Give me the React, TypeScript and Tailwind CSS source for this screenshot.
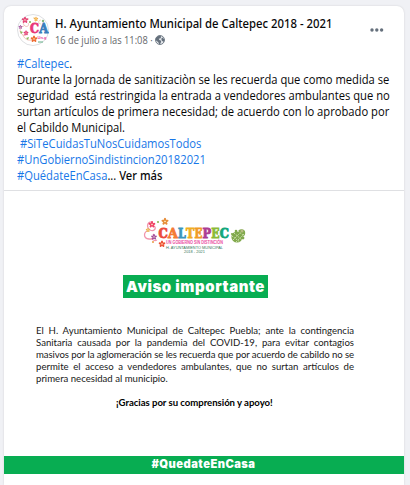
import React from 'react';

function Flower({ x, y, r, color, center = '#fff3c4' }: { x: number; y: number; r: number; color: string; center?: string }) {
  return (
    <g transform={`translate(${x} ${y})`} fill={color}>
      {[0, 72, 144, 216, 288].map((a) => (
        <ellipse key={a} cx="0" cy={-r * 0.6} rx={r * 0.36} ry={r * 0.55} transform={`rotate(${a})`} />
      ))}
      <circle r={r * 0.25} fill={center} />
    </g>
  );
}

function Avatar() {
  return (
    <svg viewBox="0 0 32 32" className="size-8 shrink-0">
      <circle cx="16" cy="16" r="15.5" fill="#fff" stroke="#dedfe2" />
      <g fill="none" stroke="#efb5ac" strokeWidth=".8">
        <path d="M12 5C7 4 5 8 7 11s6 1 4-2M7 12c-5 1-5 7-1 9s6-3 3-4M6 21c2 6 8 6 11 4" />
        <path d="M16 4c3-1 4 3 2 4M24 6c-3 0-3 4 0 4" stroke="#edd39b" />
      </g>
      <Flower x={8} y={6} r={2.9} color="#e54678" />
      <Flower x={19} y={5} r={2} color="#f3ad45" />
      <Flower x={9} y={19} r={2.2} color="#e23877" />
      <Flower x={17} y={25} r={3} color="#ee6c32" />
      <Flower x={3.5} y={13} r={1.8} color="#a85ca5" />
      <circle cx="13" cy="8" r="1" fill="#7ab553" />
      <circle cx="26" cy="7" r="1.2" fill="#83b77c" />
      <path d="M3 17l3 1-2 2zM9 24l3-1-1 3z" fill="#8aba5d" />
      <text x="13" y="19.3" fontSize="13" fontWeight="700" fontFamily="DejaVu Serif, serif" textLength="9" lengthAdjust="spacingAndGlyphs" fill="#e93879" stroke="#e93879" strokeWidth=".8">C</text>
      <text x="22.3" y="19.3" fontSize="13" fontWeight="700" fontFamily="DejaVu Serif, serif" textLength="9" lengthAdjust="spacingAndGlyphs" fill="#397fbc" stroke="#397fbc" strokeWidth=".8">A</text>
      <text x="20.5" y="25" fontSize="4" fontWeight="700" fontFamily="Liberation Sans, sans-serif" fill="#e73e9b">Un.g</text>
      <path d="M21 28h5" stroke="#61ae86" />
    </svg>
  );
}

function Globe() {
  return (
    <svg viewBox="0 0 16 16" className="size-[10px]">
      <circle cx="8" cy="8" r="7.2" fill="#e4e7eb" stroke="#65707c" strokeWidth="1.4" />
      <path d="M2 4l4-3 4 1-1 3-3 1 1 2 3 1-1 4-2 2-2-4-3-2-1-3zM12 4l3 3-1 4-3-2-1-3z" fill="#65707c" />
    </svg>
  );
}

const letters = [
  ['C', 158.5, 9.3, '#ec4b3e'], ['A', 168, 9.9, '#f47b35'], ['L', 178, 7.8, '#3b96bd'], ['T', 186, 8.3, '#efae23'],
  ['E', 194.5, 7.8, '#f09a26'], ['P', 202.5, 8.6, '#ad3c92'], ['E', 211.3, 8.3, '#8bbb38'], ['C', 219.8, 9.2, '#13a77c'],
] as const;

function TownLogo() {
  return (
    <svg viewBox="142 216 106 40" className="h-10 w-[106px]">
      <g fill="none" stroke="#f195ad" strokeWidth="1.3">
        <path d="M153 222c-6-1-7 5-3 8 4 2 7-2 4-4M149 230c-6 2-6 8 0 9 5 1 6-3 4-5M151 238c2 3 4 3 6 2" />
      </g>
      <Flower x={152} y={224.5} r={3} color="#ef4567" />
      <Flower x={165} y={221.5} r={3.2} color="#e68c38" />
      <Flower x={154} y={237} r={2.6} color="#9f4c9d" />
      <Flower x={162} y={244} r={3} color="#ed5135" />
      <Flower x={148} y={230} r={2} color="#e8b34f" />
      <circle cx="158" cy="222" r="1" fill="#83b447" />
      <circle cx="153" cy="242" r="1" fill="#e89c43" />
      {letters.map(([letter, x, width, color], i) => (
        <text key={i} x={x} y="237.6" fontSize="13.8" fontWeight="700" fontFamily="DejaVu Serif, serif" textLength={width} lengthAdjust="spacingAndGlyphs" fill={color} stroke={color} strokeWidth=".9">{letter}</text>
      ))}
      <text x="166" y="244.3" fontSize="4.5" fontWeight="700" fontFamily="Liberation Sans, sans-serif" textLength="57" lengthAdjust="spacingAndGlyphs" fill="#ea4d9f">UN GOBIERNO SIN DISTINCIÓN</text>
      <text x="166" y="249.3" fontSize="3.6" fontFamily="Liberation Sans, sans-serif" textLength="57" lengthAdjust="spacingAndGlyphs" fill="#38775b">H. AYUNTAMIENTO MUNICIPAL</text>
      <text x="184" y="253" fontSize="3.5" fontFamily="Liberation Sans, sans-serif" textLength="21" lengthAdjust="spacingAndGlyphs" fill="#38775b">2018 - 2021</text>
      <g fill="#81a94d">
        <circle cx="237" cy="237" r="5.6" />
        <circle cx="241.5" cy="233" r="3.7" />
        <circle cx="236" cy="231" r="1.3" />
        <circle cx="232" cy="234" r="1.1" />
        <circle cx="243" cy="238" r="1.4" />
      </g>
      <path d="M232 236l8 6M234 233l8 7M238 231l6 5M233 240l7-7M236 242l8-8" stroke="#edf4d3" strokeWidth=".7" strokeDasharray="1.5 1" />
      <circle cx="242" cy="231" r="1.5" fill="#b7bc83" />
    </svg>
  );
}

export default function App() {
  return (
    <main className="h-[485px] w-[410px] overflow-hidden bg-[#f0f1f5] pt-[6px] pl-1 font-['Open_Sans','Noto_Sans',sans-serif] text-[#080809]">
      <article className="h-[479px] w-[400px] rounded-t-[7px] bg-white shadow-[0_0_2px_#cdced2]">
        <header className="flex h-[47px] items-start pt-2 pl-[13px]">
          <Avatar />
          <div className="ml-[6px] w-[310px] whitespace-nowrap">
            <h1 className="h-[19px] w-max origin-left scale-x-[.905] font-['Noto_Sans',sans-serif] text-[12.5px] leading-[19px] font-medium">H. Ayuntamiento Municipal de Caltepec 2018 - 2021</h1>
            <div className="flex h-[14px] items-center text-[10.5px] leading-[14px] text-[#65676b]">
              <div className="w-[100px]"><span className="block w-max origin-left scale-x-[.885]">16 de julio a las 11:08 ·</span></div><Globe />
            </div>
          </div>
          <svg viewBox="0 0 14 4" className="mt-[13.5px] ml-[5px] h-1 w-[14px]" fill="#65707c">
            <circle cx="2" cy="2" r="1.7" /><circle cx="6.8" cy="2" r="1.7" /><circle cx="11.6" cy="2" r="1.7" />
          </svg>
        </header>
        <section className="h-[138px] border-b border-[#dfe0e3] pt-[2px] pl-[13px]">
          <div className="w-max origin-left scale-x-[.896] pt-px text-[12.5px] leading-4 whitespace-pre">
            <p><span className="text-[#1877e8]">#Caltepec</span>.</p>
            <p>Durante la Jornada de sanitizaciòn se les recuerda que como medida se</p>
            <p>seguridad  está restringida la entrada a vendedores ambulantes que no</p>
            <p>surtan artículos de primera necesidad; de acuerdo con lo aprobado por</p>
            <p>el Cabildo Municipal.</p>
            <p className="text-[#1877e8]"> #SiTeCuidasTuNosCuidamosTodos</p>
            <p className="text-[#1877e8]">#UnGobiernoSindistincion20182021</p>
            <p><span className="text-[#1877e8]">#QuédateEnCasa</span>... <span className="font-['Noto_Sans',sans-serif] font-medium">Ver más</span></p>
          </div>
        </section>
        <section className="flex flex-col">
          <div className="mt-[25px] ml-[138px] h-10"><TownLogo /></div>
          <h2 className="mt-[19px] ml-[119px] flex h-[23px] w-[145px] items-center justify-center bg-[#08ad52] font-['Inter',sans-serif] text-[15px] leading-[23px] font-black tracking-[.55px] whitespace-nowrap text-white">Aviso importante</h2>
          <div className="mt-[27px] ml-8 w-[318px] font-['Lato',sans-serif] text-[9.6px] leading-3 whitespace-nowrap text-[#202020]">
            <p className="[text-align-last:justify]">El H. Ayuntamiento Municipal de Caltepec Puebla; ante la contingencia</p>
            <p className="[text-align-last:justify]">Sanitaria causada por la pandemia del COVID-19, para evitar contagios</p>
            <p className="tracking-[-0.1px] [text-align-last:justify]">masivos por la aglomeración se les recuerda que por acuerdo de cabildo no se</p>
            <p className="[text-align-last:justify]">permite el acceso a vendedores ambulantes, que no surtan artículos de</p>
            <p>primera necesidad al municipio.</p>
            <p className="mt-3 pl-[80px] font-bold tracking-[-0.04px] text-black">¡Gracias por su comprensión y apoyo!</p>
          </div>
          <footer className="mt-[47px] flex h-[18px] items-center justify-center bg-[#08ad52] pr-[1px] font-['Inter',sans-serif] text-[11.2px] leading-none font-black tracking-[.45px] text-white">#QuedateEnCasa</footer>
        </section>
      </article>
    </main>
  );
}
